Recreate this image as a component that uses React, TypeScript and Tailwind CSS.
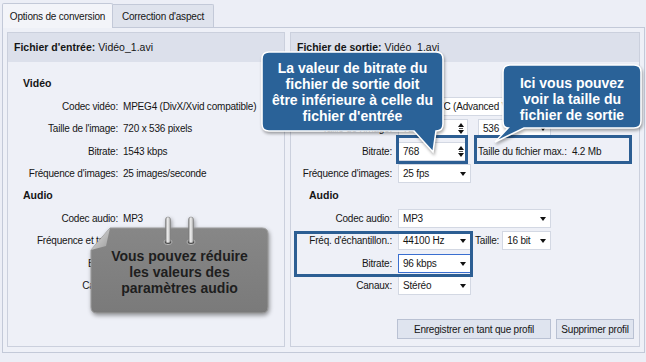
import React from "react";

type Side = "left" | "right";

const Arrow = () => (
  <span className="absolute right-[4px] top-[7px] h-0 w-0 border-x-[3.5px] border-t-[4px] border-x-transparent border-t-[#111]" />
);

const Combo = ({
  value,
  className,
  focus = false,
}: {
  value: string;
  className: string;
  focus?: boolean;
}) => (
  <div
    className={`relative flex h-[19px] shrink-0 items-center bg-white pl-[4px] ${
      focus ? "border border-[#3a6fd0]" : "border border-[#d3d8e3]"
    } ${className}`}
  >
    {value}
    <Arrow />
  </div>
);

const Spin = ({ value, className }: { value: string; className: string }) => (
  <div
    className={`relative flex h-[19px] shrink-0 items-center border border-[#d3d8e3] bg-white pl-[4px] ${className}`}
  >
    {value}
    <span className="absolute right-[3px] top-[3px] h-0 w-0 border-x-[3px] border-b-[4px] border-x-transparent border-b-[#111]" />
    <span className="absolute right-[4px] top-[8px] h-px w-[4px] bg-[#555]" />
    <span className="absolute bottom-[3px] right-[3px] h-0 w-0 border-x-[3px] border-t-[4px] border-x-transparent border-t-[#111]" />
  </div>
);

const Row = ({
  side,
  label,
  children,
}: {
  side: Side;
  label: string;
  children?: React.ReactNode;
}) => (
  <div className="flex h-[22.5px] items-center">
    <span
      className={`shrink-0 whitespace-nowrap text-right ${
        side === "left" ? "mr-[5px] w-[110px]" : "mr-[6px] w-[101px]"
      }`}
    >
      {label}
    </span>
    {children}
  </div>
);

const Heading = ({ side, text, h }: { side: Side; text: string; h: string }) => (
  <div
    className={`flex items-center text-[10.5px] font-bold tracking-normal ${h} ${
      side === "left" ? "pl-[15px]" : "pl-[18px]"
    }`}
  >
    {text}
  </div>
);

const GroupHeader = ({ title, file }: { title: string; file: string }) => (
  <div className="flex h-[29px] items-center bg-[#dce0eb] px-[6px] text-[10.5px] tracking-normal">
    <span className="font-bold">{title}</span>
    <span className="ml-[3px]">{file}</span>
  </div>
);

export default function App() {
  return (
    <div className="relative h-[362px] w-[646px] overflow-hidden bg-[#eceef6] font-['Liberation_Sans',Arial,sans-serif] text-[10px] tracking-[-0.2px] text-[#151515]">
      {/* tabs */}
      <div className="flex h-[27px] items-end pl-[2px]">
        <div className="relative z-10 -mb-px flex h-[25px] w-[111px] items-center justify-center rounded-t-[2px] border border-b-0 border-[#c3c9d8] bg-[#f3f4f9]">
          Options de conversion
        </div>
        <div className="flex h-[23px] w-[101px] items-center justify-center rounded-tr-[2px] border border-b-0 border-l-0 border-[#c3c9d8] bg-[#dfe3ed]">
          Correction d'aspect
        </div>
      </div>

      {/* tab page */}
      <div className="ml-[2px] flex h-[326px] w-[643px] gap-[5px] border border-[#c3c9d8] bg-[#eef0f7] px-[4px] pb-[5px] pt-[4px]">
        {/* input file */}
        <div className="flex w-[278px] flex-col border border-[#cbd0dd] bg-[#eef0f7]">
          <GroupHeader title="Fichier d'entrée:" file="Vidéo_1.avi" />
          <div className="pt-[10px]">
            <Heading side="left" text="Vidéo" h="h-[23px]" />
            <Row side="left" label="Codec vidéo:">MPEG4 (DivX/Xvid compatible)</Row>
            <Row side="left" label="Taille de l'image:">720 x 536 pixels</Row>
            <Row side="left" label="Bitrate:">1543 kbps</Row>
            <Row side="left" label="Fréquence d'images:">25 images/seconde</Row>
            <Heading side="left" text="Audio" h="h-[22px]" />
            <Row side="left" label="Codec audio:">MP3</Row>
            <Row side="left" label="Fréquence et taille:">44100 Hz, 16 bit</Row>
            <Row side="left" label="Bitrate:">128 kbps</Row>
            <Row side="left" label="Canaux:">Stéréo</Row>
          </div>
        </div>

        {/* output file */}
        <div className="flex w-[350px] flex-col border border-[#cbd0dd] bg-[#eef0f7]">
          <GroupHeader title="Fichier de sortie:" file="Vidéo_1.avi" />
          <div className="pt-[10px]">
            <Heading side="right" text="Vidéo" h="h-[23px]" />
            <Row side="right" label="Codec vidéo:">
              <Combo value="H.264/AVC (Advanced Video)" className="w-[153px] whitespace-nowrap" />
            </Row>
            <Row side="right" label="Taille de l'image:">
              <Spin value="720" className="w-[70px]" />
              <Combo value="536" className="ml-[10px] w-[73px]" />
            </Row>
            <Row side="right" label="Bitrate:">
              <Spin value="768" className="w-[70px]" />
              <span className="ml-[10px] whitespace-pre">Taille du fichier max.:  4.2 Mb</span>
            </Row>
            <Row side="right" label="Fréquence d'images:">
              <Combo value="25 fps" className="w-[73px]" />
            </Row>
            <Heading side="right" text="Audio" h="h-[22px]" />
            <Row side="right" label="Codec audio:">
              <Combo value="MP3" className="w-[153px]" />
            </Row>
            <Row side="right" label="Fréq. d'échantillon.:">
              <Combo value="44100 Hz" className="w-[73px]" />
              <span className="ml-[4px] mr-[3px]">Taille:</span>
              <Combo value="16 bit" className="w-[49px]" />
            </Row>
            <Row side="right" label="Bitrate:">
              <Combo value="96 kbps" className="w-[73px]" focus />
            </Row>
            <Row side="right" label="Canaux:">
              <Combo value="Stéréo" className="w-[73px]" />
            </Row>
          </div>
          <div className="mt-[22px] flex justify-end gap-[5px] pr-[5px]">
            <button className="h-[20px] w-[154px] border border-[#b9c1d3] bg-[#dfe4ef]">
              Enregistrer en tant que profil
            </button>
            <button className="h-[20px] w-[78px] border border-[#b9c1d3] bg-[#dfe4ef]">
              Supprimer profil
            </button>
          </div>
        </div>
      </div>

      {/* highlight frames */}
      <div className="absolute left-[396px] top-[135px] h-[29px] w-[72px] border-[3px] border-[#2c5e93]" />
      <div className="absolute left-[474px] top-[135px] h-[29px] w-[158px] border-[3px] border-[#2c5e93]" />
      <div className="absolute left-[294px] top-[231px] h-[46px] w-[179px] border-[3px] border-[#2c5e93]" />

      {/* callout: bitrate */}
      <svg
        className="absolute left-[261px] top-[51px] drop-shadow-[1px_2px_1.5px_rgba(0,0,0,0.35)]"
        width="184"
        height="104"
        viewBox="0 0 184 104"
      >
        <path
          d="M8,1 H175 Q182,1 182,8 V73 Q182,80 175,80 L172,101 L153,80 H8 Q1,80 1,73 V8 Q1,1 8,1 Z"
          fill="#2a6298"
          stroke="#ffffff"
          strokeWidth="1.6"
        />
      </svg>
      <div className="absolute left-[262px] top-[60px] w-[181px] text-center text-[14px] font-bold leading-[16px] tracking-normal text-white">
        La valeur de bitrate du
        <br />
        fichier de sortie doit
        <br />
        être inférieure à celle du
        <br />
        fichier d'entrée
      </div>

      {/* callout: file size */}
      <svg
        className="absolute left-[492px] top-[63px] drop-shadow-[1px_2px_1.5px_rgba(0,0,0,0.35)]"
        width="152"
        height="82"
        viewBox="0 0 152 82"
      >
        <path
          d="M18,2 H142 Q149,2 149,9 V58 Q149,65 142,65 H32 L3,79 L16,65 Q11,65 11,58 V9 Q11,2 18,2 Z"
          fill="#2a6298"
          stroke="#ffffff"
          strokeWidth="1.6"
        />
      </svg>
      <div className="absolute left-[503px] top-[75px] w-[138px] text-center text-[14px] font-bold leading-[16px] tracking-normal text-white">
        Ici vous pouvez
        <br />
        voir la taille du
        <br />
        fichier de sortie
      </div>

      {/* sticky note */}
      <svg
        className="absolute left-[90px] top-[215px] drop-shadow-[1px_2px_2px_rgba(0,0,0,0.4)]"
        width="184"
        height="104"
        viewBox="0 0 184 104"
      >
        <defs>
          <linearGradient id="noteBg" x1="0" y1="0" x2="0" y2="1">
            <stop offset="0" stopColor="#878787" />
            <stop offset="1" stopColor="#7a7a7a" />
          </linearGradient>
          <linearGradient id="fold" x1="0" y1="0" x2="1" y2="1">
            <stop offset="0" stopColor="#e2e2e2" />
            <stop offset="1" stopColor="#9c9c9c" />
          </linearGradient>
          <linearGradient id="ring" x1="0" y1="0" x2="1" y2="0">
            <stop offset="0" stopColor="#8a8a8a" />
            <stop offset="0.45" stopColor="#f4f4f4" />
            <stop offset="1" stopColor="#9a9a9a" />
          </linearGradient>
        </defs>
        <path
          d="M20,13 H172 Q178,13 178,19 V92 Q178,98 172,98 H7 Q1,98 1,92 V35 Z"
          fill="url(#noteBg)"
          stroke="#9b9b9b"
          strokeWidth="1"
        />
        <path d="M20,13 L1,35 L16,31 Z" fill="url(#fold)" />
        {[78, 101].map((x) => (
          <g key={x}>
            <ellipse cx={x} cy={27} rx={4} ry={2.6} fill="#4a4a4a" stroke="#b5b5b5" strokeWidth="1" />
            <rect x={x - 2.5} y={2} width={5} height={26} rx={2.5} fill="url(#ring)" stroke="#777" strokeWidth="0.5" />
          </g>
        ))}
      </svg>
      <div className="absolute left-[91px] top-[248px] w-[177px] text-center text-[14px] font-bold leading-[16px] tracking-normal text-[#1e1e1e]">
        Vous pouvez réduire
        <br />
        les valeurs des
        <br />
        paramètres audio
      </div>
    </div>
  );
}
